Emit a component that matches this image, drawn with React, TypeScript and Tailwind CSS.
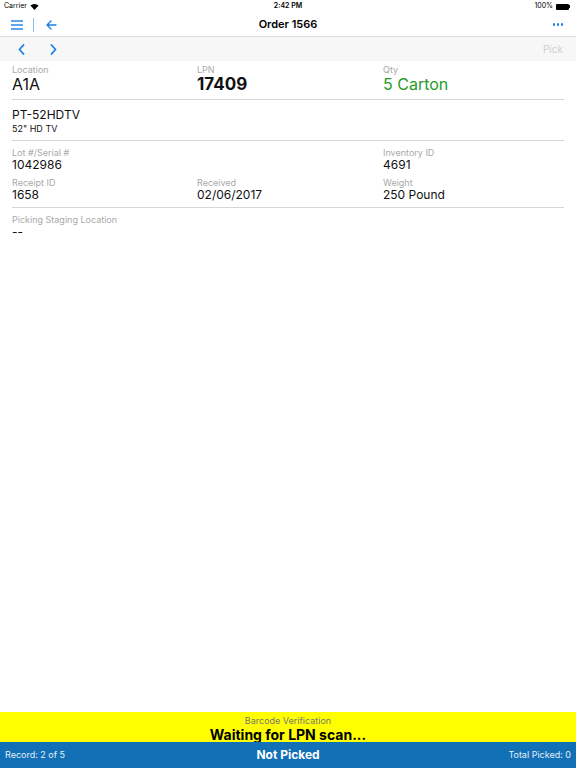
import React from "react";

function Field(props: { label: string; value: string; className?: string }) {
  return (
    <div className="flex flex-col">
      <p className="text-[9px] leading-[10px] text-[#a9a9a9]">{props.label}</p>
      <p className={props.className ?? "text-[12px] leading-[14px] text-[#111]"}>{props.value}</p>
    </div>
  );
}

export default function App(): React.JSX.Element {
  return (
    <div className="w-[576px] h-[768px] bg-white flex flex-col font-['Inter',sans-serif] overflow-hidden">
      {/* status bar */}
      <div className="h-[13px] flex items-center justify-between px-[4px] text-[7px] text-black relative">
        <div className="flex items-center gap-[3px]">
          <span>Carrier</span>
          <svg width="9" height="7" viewBox="0 0 12 9">
            <path d="M6 9 L0.5 3.2 A8 8 0 0 1 11.5 3.2 Z" fill="#000" />
          </svg>
        </div>
        <span className="absolute left-1/2 -translate-x-1/2 font-semibold">2:42 PM</span>
        <div className="flex items-center gap-[3px] pr-[2px]">
          <span>100%</span>
          <div className="flex items-center">
            <div className="w-[13px] h-[6px] bg-black rounded-[1px]" />
            <div className="w-[1px] h-[3px] bg-black" />
          </div>
        </div>
      </div>

      {/* nav bar */}
      <div className="h-[24px] flex items-center justify-between px-[11px] border-b border-[#dcdcdc] relative">
        <div className="flex items-center">
          <svg width="12" height="10" viewBox="0 0 12 10" stroke="#1a7fe8" strokeWidth="1.4">
            <line x1="0" y1="1" x2="12" y2="1" />
            <line x1="0" y1="5" x2="12" y2="5" />
            <line x1="0" y1="9" x2="12" y2="9" />
          </svg>
          <div className="w-[1px] h-[14px] bg-[#8bbdf0] ml-[10px] mr-[12px]" />
          <svg width="11" height="10" viewBox="0 0 11 10" fill="none" stroke="#1a7fe8" strokeWidth="1.4" strokeLinecap="round" strokeLinejoin="round">
            <path d="M10 5 H1 M5 1 L1 5 L5 9" />
          </svg>
        </div>
        <span className="absolute left-1/2 -translate-x-1/2 text-[11px] font-semibold text-black">Order 1566</span>
        <div className="flex items-center gap-[1.5px] pr-[2px]">
          <div className="w-[2.5px] h-[2.5px] rounded-full bg-[#1a7fe8]" />
          <div className="w-[2.5px] h-[2.5px] rounded-full bg-[#1a7fe8]" />
          <div className="w-[2.5px] h-[2.5px] rounded-full bg-[#1a7fe8]" />
        </div>
      </div>

      {/* toolbar */}
      <div className="h-[24px] bg-[#f7f7f7] flex items-center justify-between pl-[18px] pr-[13px]">
        <div className="flex items-center gap-[25px]">
          <svg width="7" height="11" viewBox="0 0 7 11" fill="none" stroke="#1a7fe8" strokeWidth="1.8" strokeLinecap="round" strokeLinejoin="round">
            <path d="M5.5 1 L1.5 5.5 L5.5 10" />
          </svg>
          <svg width="7" height="11" viewBox="0 0 7 11" fill="none" stroke="#1a7fe8" strokeWidth="1.8" strokeLinecap="round" strokeLinejoin="round">
            <path d="M1.5 1 L5.5 5.5 L1.5 10" />
          </svg>
        </div>
        <span className="text-[10px] text-[#cfcfcf]">Pick</span>
      </div>

      {/* content */}
      <div className="flex flex-col px-[12px]">
        <div className="grid grid-cols-[185px_186px_1fr] pt-[4px] pb-[6px] border-b border-[#d6d6d6]">
          <Field label="Location" value="A1A" className="text-[16px] leading-[18px] text-[#111]" />
          <Field label="LPN" value="17409" className="text-[17px] leading-[18px] font-bold text-[#111]" />
          <Field label="Qty" value="5 Carton" className="text-[16px] leading-[18px] text-[#269a26]" />
        </div>

        <div className="flex flex-col pt-[7px] pb-[5px] border-b border-[#d6d6d6]">
          <p className="text-[12px] leading-[16px] text-[#111]">PT-52HDTV</p>
          <p className="text-[9px] leading-[12px] text-[#111]">52" HD TV</p>
        </div>

        <div className="grid grid-cols-[185px_186px_1fr] gap-y-[6px] pt-[7px] pb-[5px] border-b border-[#d6d6d6]">
          <Field label="Lot #/Serial #" value="1042986" />
          <div />
          <Field label="Inventory ID" value="4691" />
          <Field label="Receipt ID" value="1658" />
          <Field label="Received" value="02/06/2017" />
          <Field label="Weight" value="250 Pound" />
        </div>

        <div className="pt-[7px]">
          <Field label="Picking Staging Location" value="--" />
        </div>
      </div>

      <div className="flex-1" />

      {/* barcode verification */}
      <div className="h-[30px] bg-[#ffff00] flex flex-col items-center pt-[3px]">
        <p className="text-[9px] leading-[11px] text-[#777]">Barcode Verification</p>
        <p className="text-[14px] leading-[17px] font-bold text-black">Waiting for LPN scan...</p>
      </div>

      {/* footer */}
      <div className="h-[26px] bg-[#1270b6] flex items-center justify-between px-[5px] relative">
        <span className="text-[9px] text-[#e6eef7]">Record: 2 of 5</span>
        <span className="absolute left-1/2 -translate-x-1/2 text-[12px] font-bold text-white">Not Picked</span>
        <span className="text-[9px] text-[#e6eef7]">Total Picked: 0</span>
      </div>
    </div>
  );
}
